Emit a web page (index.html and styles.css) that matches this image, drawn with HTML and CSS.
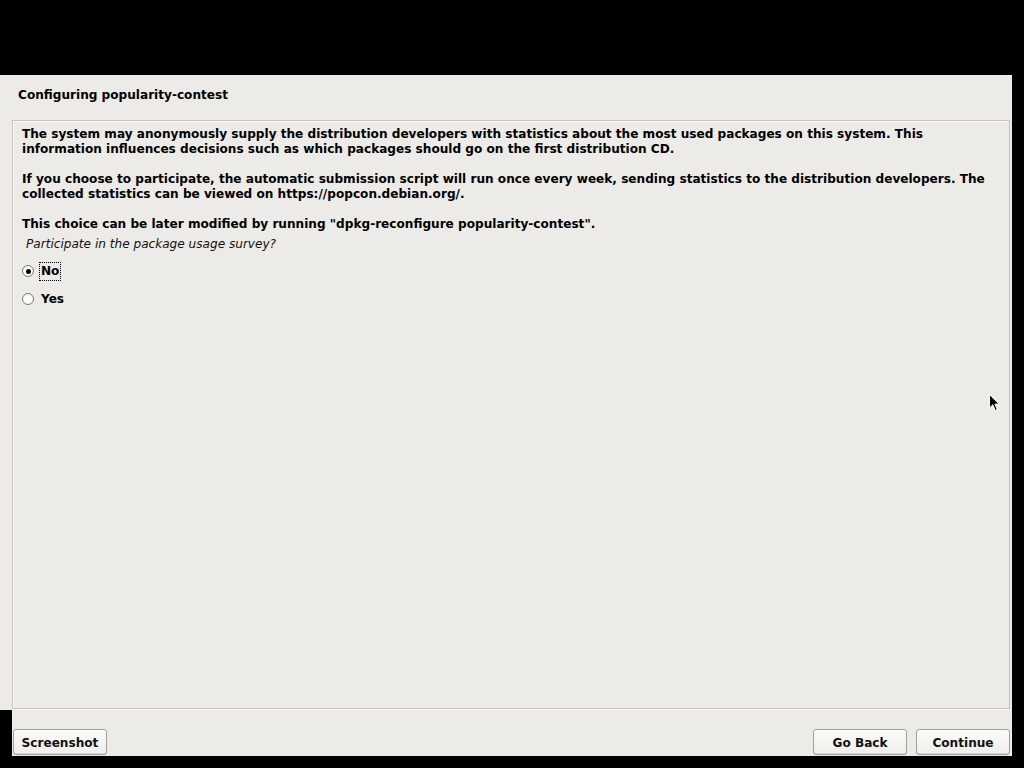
FILE: index.html
```html
<!DOCTYPE html>
<html>
<head>
<meta charset="utf-8">
<link rel="stylesheet" href="styles.css">
</head>
<body>
<div class="screen">
  <div class="topbar"></div>
  <div class="window">
    <div class="title">Configuring popularity-contest</div>
    <div class="content">
      <p class="para">The system may anonymously supply the distribution developers with statistics about the most used packages on this system. This information influences decisions such as which packages should go on the first distribution CD.</p>
      <p class="para">If you choose to participate, the automatic submission script will run once every week, sending statistics to the distribution developers. The collected statistics can be viewed on https://popcon.debian.org/.</p>
      <p class="para">This choice can be later modified by running "dpkg-reconfigure popularity-contest".</p>
      <div class="question">Participate in the package usage survey?</div>
      <div class="options">
        <div class="option"><span class="radio checked"></span><span class="label focused">No</span></div>
        <div class="option"><span class="radio"></span><span class="label">Yes</span></div>
      </div>
    </div>
  </div>
  <div class="buttonbar">
    <button class="btn btn-shot">Screenshot</button>
    <div class="spacer"></div>
    <button class="btn">Go Back</button>
    <button class="btn">Continue</button>
  </div>
  <svg class="cursor" width="12" height="18" viewBox="0 0 12 18">
    <path d="M0.5 0.5 L0.5 14 L3.8 10.8 L6.3 16.5 L8.3 15.6 L5.9 10.1 L10.3 10.1 Z" fill="#000" stroke="#fff" stroke-width="1"/>
  </svg>
</div>
</body>
</html>
```

FILE: styles.css
```css
html, body {
  margin: 0;
  padding: 0;
  background: #000;
}
.screen {
  position: relative;
  width: 1024px;
  height: 768px;
  overflow: hidden;
  background: #000;
  font-family: "DejaVu Sans", "Liberation Sans", sans-serif;
  color: #000;
}
.topbar {
  height: 75px;
}
.window {
  width: 1012px;
  height: 635px;
  background: #edebe7;
  display: flex;
  flex-direction: column;
}
.title {
  height: 45px;
  padding-left: 18px;
  font-size: 12.1px;
  font-weight: bold;
  line-height: 15px;
  padding-top: 13px;
  box-sizing: border-box;
}
.content {
  margin-left: 12px;
  width: 998px;
  height: 589px;
  box-sizing: border-box;
  border: 1px solid #c7c3b9;
  box-shadow: inset 1px 1px 0 #fbfaf7, 0 1px 0 #f6f5f0;
  padding: 6px 0 0 9px;
}
.para {
  margin: 0 0 15px 0;
  font-size: 12.1px;
  font-weight: bold;
  line-height: 15px;
  width: 975px;
}
.para:nth-of-type(3) {
  margin-bottom: 5px;
}
.question {
  font-size: 12.1px;
  font-style: italic;
  line-height: 15px;
  padding-left: 4px;
  color: #111;
}
.options {
  display: flex;
  flex-direction: column;
  gap: 8px;
  padding-top: 9px;
}
.option {
  display: flex;
  align-items: center;
  height: 20px;
}
.radio {
  width: 12px;
  height: 12px;
  box-sizing: border-box;
  border: 1px solid #7b786f;
  border-radius: 50%;
  background: #fcfcfb;
  margin: 0 5px 0 0;
  position: relative;
}
.radio.checked::after {
  content: "";
  position: absolute;
  left: 2.5px;
  top: 2.5px;
  width: 5px;
  height: 5px;
  border-radius: 50%;
  background: #000;
}
.label {
  font-size: 12.1px;
  font-weight: bold;
  line-height: 15px;
  padding: 1px 1px;
  border: 1px dotted transparent;
}
.label.focused {
  border-color: #000;
}
.buttonbar {
  margin-left: 12px;
  width: 1000px;
  height: 46px;
  background: #edebe7;
  display: flex;
  align-items: flex-end;
  padding: 0 2px 1px 1px;
  box-sizing: border-box;
  gap: 9px;
}
.spacer {
  flex: 1;
}
.btn {
  width: 94px;
  height: 26px;
  border: 1px solid #a39f96;
  border-radius: 3px;
  background: linear-gradient(#fbfbfa, #efeeeb);
  font-family: "DejaVu Sans", "Liberation Sans", sans-serif;
  font-size: 12.1px;
  font-weight: bold;
  color: #111;
  padding: 2px 0 0 0;
  box-shadow: inset 0 -1px 0 #dcd9d2;
}
.cursor {
  position: absolute;
  left: 989px;
  top: 394px;
}
```
